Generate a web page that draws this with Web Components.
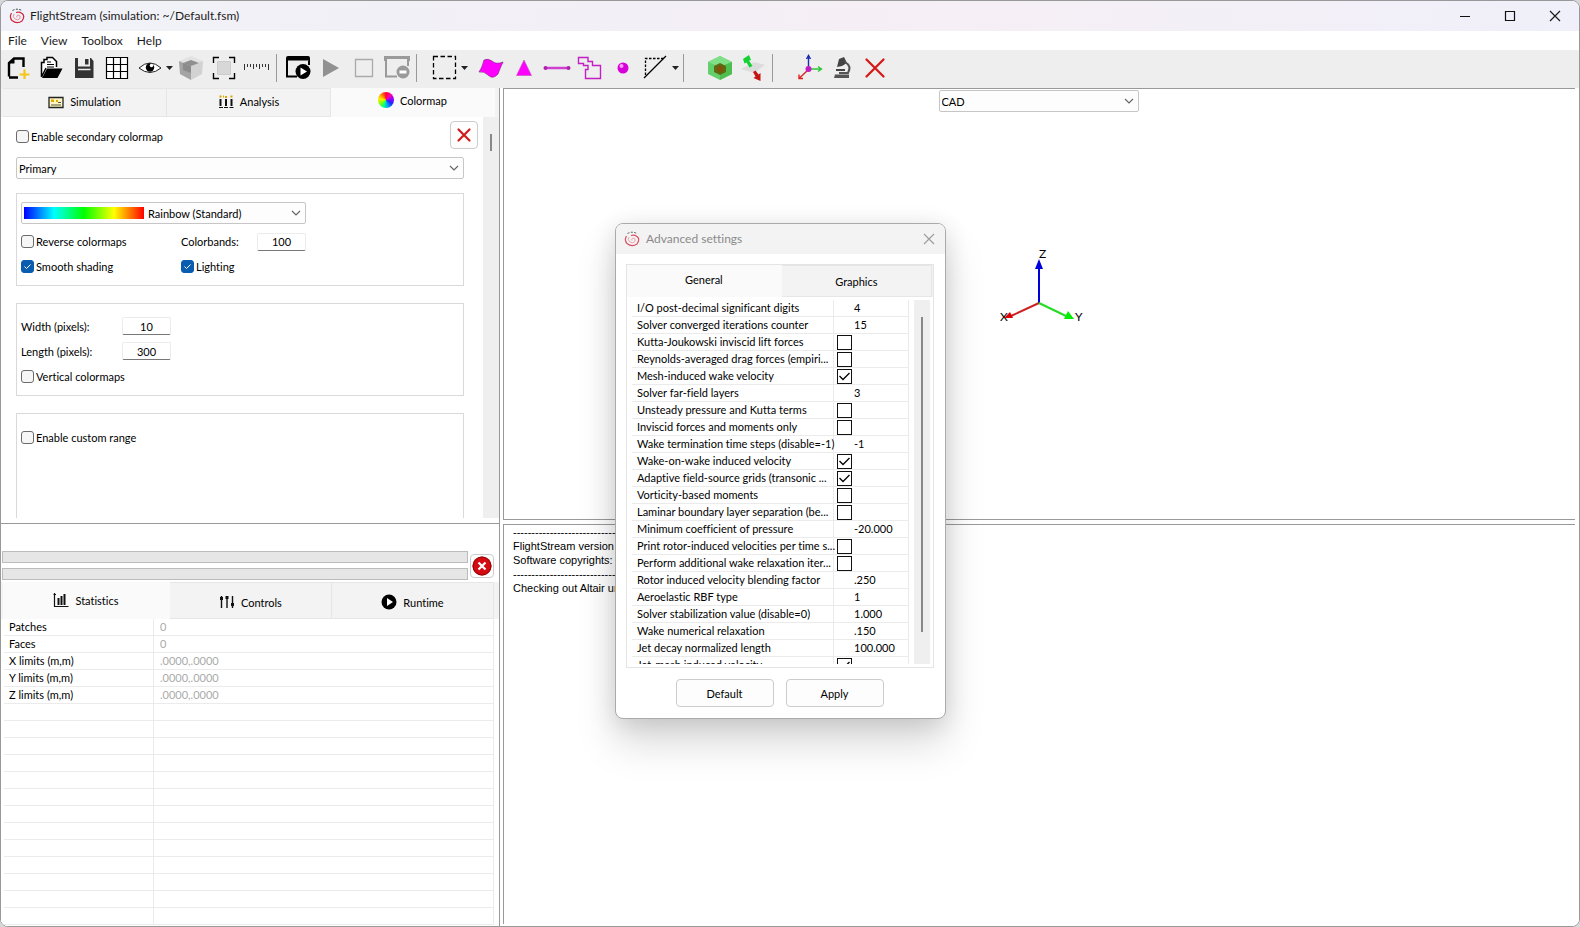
<!DOCTYPE html>
<html lang="en">
<head>
<meta charset="utf-8">
<title>FlightStream</title>
<style>
html, body { margin: 0; height: 100%; background: #d8d8dc; }
body { font: 11px/17px Lato, "Liberation Sans", sans-serif; font-variant-ligatures: none; color: #000; }
</style>
</head>
<body>
<fs-app></fs-app>
<script>
const ICONS = {
  logo: [16, 16, '<g fill="none" stroke="#d0273c"><path d="M3.5 2.500Q8 0 12.500 2.300" stroke="#333" stroke-dasharray="2 1.500"/><path d="M2.500 5Q0 9 3 12.500Q8 16.500 13 13Q16.500 8 13 5.500Q10 3.500 7 4.500" stroke-width="1.200"/><path d="M5 6Q3 9 6 11Q9 13 11 10.500Q12 7 9 7Q7 7.500 8 9.500" stroke="#e07a88" stroke-width=".8"/></g>'],
  file: [24, 24, '<path d="M3 20.500V7L8 2.500H17.500V11M17.500 14V14M3 21.500H12" fill="none" stroke="#000" stroke-width="2.400"/><path d="M3 7.500H8.500V2z"/><path d="M18.500 13.500V23M13.500 18.500H23.500" stroke="#f5c518" stroke-width="2.200"/>'],
  open: [24, 24, '<path d="M2.500 21V6.500H5V3.500H8V1.500H13.500L17.500 5.500V11M2.500 21L7 12" fill="#fff" stroke="#000" stroke-width="1.500"/><path d="M8 6H12M8 8.500H15M8 11H15" stroke="#000"/><path d="M3 22L8 12.500H23.500L18.500 22z"/>'],
  save: [24, 24, '<path d="M3 2H6V10.500H18V2H19L21.500 5V22H3z" fill="#333"/><path d="M13 3H16.500V8.500H13z" fill="#333"/><path d="M6 13.500H18.500" stroke="#eee" stroke-width="1.500"/>'],
  grid: [24, 24, '<path d="M1.500 1.500H22.500V22.500H1.500zM8.500 1.500V22.500M15.500 1.500V22.500M1.500 8.500H22.500M1.500 15.500H22.500" fill="#fff" stroke="#000" stroke-width="1.200"/>'],
  eye: [24, 24, '<path d="M1 12Q12 2 23 12Q12 21 1 12z" fill="#fff" stroke="#222" stroke-width="1"/><circle cx="12" cy="11.500" r="4.200"/><circle cx="13.500" cy="9.500" r="1.800" fill="#fff"/>'],
  caret: [8, 24, '<path d="M0 10H7L3.500 14z" fill="#222"/>'],
  cube: [28, 26, '<path d="M14 1L26 6L14 11L2 6z" fill="#e2e2e2"/><path d="M2 6L14 11V25L3 19z" fill="#a4a4a4"/><path d="M14 11L26 6L25 19L14 25z" fill="#d2d2d2"/><path d="M14 5L22 8L14 11L6 8z" fill="#8f8f8f"/><path d="M6 8L14 11V18L6 15z" fill="#8b8b8b"/>'],
  frame: [24, 24, '<path d="M5.500 5.500H18.500V18.500H5.500z" fill="#d7d7d7" stroke="#ccc"/><path d="M1.500 7V1.500H7M17 1.500H22.500V7M22.500 17V22.500H17M7 22.500H1.500V17" fill="none" stroke="#000" stroke-width="1.400"/>'],
  ruler: [28, 24, '<path d="M1.500 8V14M4.500 8V11M7.500 8V11M10.500 8V13M13.500 8V11M16.500 8V13M19.500 8V11M22.500 8V11M25.500 8V14" stroke="#333"/>'],
  run: [26, 26, '<path d="M1 3Q1 1 3 1H23Q25 1 25 3V8H23.500V5.500H1z"/><path d="M2 5V21.500H12M24 6V10" fill="none" stroke="#000" stroke-width="2"/><circle cx="18" cy="16.500" r="7.500"/><path d="M15.500 12.500L22 16.500L15.500 20.500z" fill="#fff"/>'],
  play: [24, 24, '<path d="M4 3L20 12L4 21z" fill="#919191"/>'],
  stop: [24, 24, '<path d="M3.500 3.500H20.500V20.500H3.500z" fill="none" stroke="#aaa" stroke-width="1.300"/>'],
  halt: [26, 26, '<path d="M1.500 6V2.500H24.500V6" fill="none" stroke="#9a9a9a" stroke-width="3"/><path d="M2 5V21.500H13M24 6V11" fill="none" stroke="#9a9a9a" stroke-width="2"/><circle cx="19" cy="17" r="6.500" fill="#9a9a9a"/><path d="M15.500 17H22.500" stroke="#fff" stroke-width="3"/>'],
  marquee: [26, 26, '<path d="M1.500 1.500H23.500V23.500H1.500z" fill="none" stroke="#000" stroke-width="1.300" stroke-dasharray="4.500 2.500"/>'],
  flag: [26, 24, '<path d="M6 4Q10 2 14 5Q18 9 25 6Q23 10 20 18Q15 24 10 19Q6 15 1 16Q4 12 6 4z" fill="#f0f" stroke="#7d157d" stroke-width=".6"/>'],
  tri: [24, 24, '<path d="M12 4L19.500 19.500H4.500z" fill="#f0f" stroke="#b5b" stroke-width=".6"/>'],
  line: [28, 24, '<path d="M3 12H25" stroke="#d040d0" stroke-width="2.400"/><circle cx="2.500" cy="12" r="2" fill="#a2a"/><circle cx="25.500" cy="12" r="2" fill="#a2a"/>'],
  poly: [26, 26, '<path d="M1.500 2.500H11V6.500H15.500V10.500H23.500V23.500H8.500V14.500H11V10.500H6.500V8.500H1.500z" fill="none" stroke="#c41fc4" stroke-width="1.400"/>'],
  ball: [24, 24, '<circle cx="12" cy="12" r="5.500" fill="#d800d8"/><circle cx="10.500" cy="10" r="2" fill="#ff9dff"/>'],
  cut: [26, 26, '<path d="M2.500 20V3.500H21" fill="none" stroke="#000" stroke-width="1.300" stroke-dasharray="2.500 1.500"/><path d="M1 23L23 1" stroke="#000" stroke-width="1.300"/>'],
  gcube: [28, 28, '<path d="M14 2L26 8V20L14 26L2 20V8z" fill="#62cf6a"/><path d="M14 2L26 8L14 13L2 8z" fill="#7fe087"/><path d="M14 13V26L26 20V8z" fill="#4fbe50"/><path d="M14 9L20 12V18L14 21L8 18V12z" fill="#5d6b10"/><circle cx="14" cy="15" r="3" fill="#85500c"/>'],
  flip: [26, 28, '<path d="M1 15L14 8L25 11L14 19z" fill="#dcdcdc"/><path d="M3 5L9 1L11 6L9 6.500L12.500 12L9.500 13.500L6.500 8.500L4.500 9.500z" fill="#14d234"/><path d="M13 18L15.500 16.500L18.500 20.500L20.500 19V27L13.500 24L15.500 22.500z" fill="#c41414"/>'],
  axes: [28, 28, '<path d="M13.500 14V2M11.500 5L13.500 1.500L15.500 5" fill="none" stroke="#1c2bb0" stroke-width="1.400"/><path d="M14 15H26M23 12.500L26.500 15L23 17.500" fill="none" stroke="#2bc83a" stroke-width="1.400"/><path d="M13 16L4 24.500M4 20.500V24.500H8" fill="none" stroke="#d22" stroke-width="1.400"/><circle cx="13.500" cy="15" r="3" fill="#c21cc2"/>'],
  scope: [24, 24, '<path d="M9 3L14 1L17 7L12 10L7 11z" fill="#444"/><path d="M15 6Q22 10 18 17H9" fill="none" stroke="#555" stroke-width="2"/><path d="M6 14H15" stroke="#444" stroke-width="2"/><path d="M5 18.500H19V22H4z" fill="#555"/>'],
  cross: [24, 24, '<path d="M3.500 3.500L20.500 20.500M20.500 3.500L3.500 20.500" stroke="#d41a1a" stroke-width="2.300" stroke-linecap="round"/>'],
  crossS: [16, 16, '<path d="M2.500 2.500L13.500 13.500M13.500 2.500L2.500 13.500" stroke="#cf1c1c" stroke-width="2.200" stroke-linecap="round"/>'],
  sim: [16, 16, '<path d="M1 3.500H15V13.500H1z" fill="#fdf6c0" stroke="#222" stroke-width="1.300"/><path d="M3 5.500H6V8H3zM8 6H10V8H8z" fill="#e0a800"/><path d="M3 11H13M10 8.500H13" stroke="#554"/>'],
  ana: [16, 16, '<path d="M2.500 5V12M8 5V12M13.500 5V12" stroke="#111" stroke-width="2"/><path d="M1 13.500H5M6 13.500H10M11.500 13.500H15.500" stroke="#111"/><path d="M2.500 1.500V3.500M5 2.500H6M8 2V4M13.500 1.500V3.500" stroke="#d9a400" stroke-width="2"/>'],
  stats: [16, 16, '<path d="M1.500 1V14.500H15.500M.5 2.500H3" fill="none" stroke="#111" stroke-width="1.200"/><path d="M5.500 6V13M8.500 4V13M11.500 2V13" stroke="#111" stroke-width="2"/>'],
  ctl: [16, 16, '<path d="M2.500 2V14M8 2V14M13.500 2V14" stroke="#111" stroke-width="1.400"/><path d="M1 4.500H4M6.500 3.500H9.500M12 10.500H15" stroke="#111" stroke-width="3"/>'],
  rt: [16, 16, '<circle cx="8" cy="8" r="7.500"/><path d="M6 4L12 8L6 12z" fill="#fff"/>'],
  abort: [20, 20, '<circle cx="10" cy="10" r="9.500" fill="#d40b12"/><circle cx="10" cy="10" r="9" fill="none" stroke="#8e0508"/><path d="M6.500 6.500L13.500 13.500M13.500 6.500L6.500 13.500" stroke="#fff" stroke-width="2.200"/>'],
  min: [12, 12, '<path d="M1 6.500H11" stroke="#111" stroke-width="1.200"/>'],
  max: [12, 12, '<path d="M1.500 1.500H10.500V10.500H1.500z" fill="none" stroke="#111" stroke-width="1.200"/>'],
  close: [12, 12, '<path d="M1 1L11 11M11 1L1 11" stroke="currentColor" stroke-width="1.200"/>'],
  chev: [10, 6, '<path d="M1 1L5 5L9 1" fill="none" stroke="#666" stroke-width="1.200"/>']
};
const icon = n => { const [w, h, p] = ICONS[n]; return `<svg width="${w}" height="${h}" viewBox="0 0 ${w} ${h}" aria-hidden="true">${p}</svg>`; };

const BASE = '*{box-sizing:border-box} svg{display:block;flex:none} button,input,select{font:inherit;color:inherit;margin:0} button{padding:0;border:0;background:none}';
function define(name, css, html) {
  customElements.define(name, class extends HTMLElement {
    connectedCallback() {
      if (this.shadowRoot) return;
      const t = document.createElement('template');
      t.innerHTML = `<style>${BASE}${css}</style>${typeof html === 'function' ? html(this) : html}`;
      this.attachShadow({ mode: 'open' }).append(t.content.cloneNode(true));
    }
  });
}

define('fs-titlebar', `
  :host{display:flex;align-items:center;height:30px;padding-left:8px;font-size:12px;line-height:16px;color:#1c1c1c;background:linear-gradient(90deg,#f1f2f9,#f3eff6 40%,#f6eff5 60%,#f0f0fa)}
  h1{font:inherit;margin:0 auto 0 5px}
  button{width:45px;height:30px;display:grid;place-items:center}
  .right{display:flex;margin-right:2px}`,
  `${icon('logo')}<h1>FlightStream (simulation: ~/Default.fsm)</h1>
   <div class="right"><button aria-label="Minimize">${icon('min')}</button><button aria-label="Maximize">${icon('max')}</button><button aria-label="Close">${icon('close')}</button></div>`);

define('fs-menubar', `
  :host{display:block;background:#fff;font-size:12px;line-height:19px;color:#1c1c1c}
  nav{display:flex;gap:14px;padding-left:7px}`,
  `<nav>${['File', 'View', 'Toolbox', 'Help'].map(m => `<button>${m}</button>`).join('')}</nav>`);

const TOOLS = [['file', 'New'], ['open', 'Open'], ['save', 'Save'], ['grid', 'Grid'], ['eye', 'Visibility'], ['caret', 'Visibility options'], ['cube', 'Shading'], ['frame', 'Fit view'], ['ruler', 'Measure'], 0,
  ['run', 'Run solver', 'near'], ['play', 'Play'], ['stop', 'Stop'], ['halt', 'Remove run'], 0, ['marquee', 'Select region', 'gap'], ['caret', 'Select options'], ['flag', 'Select surface', 'mid'], ['tri', 'Select face'], ['line', 'Select edge'], ['poly', 'Select loop'], ['ball', 'Select vertex'], ['cut', 'Select by plane'], ['caret', 'Plane options'], 0,
  ['gcube', 'Volume', 'wide'], ['flip', 'Flip normals'], 0, ['axes', 'Coordinate systems', 'wide'], ['scope', 'Inspect'], ['cross', 'Delete']];
define('fs-toolbar', `
  :host{display:flex;align-items:center;height:38px;box-sizing:border-box;background:#eee;padding-bottom:3px}
  button{width:33px;height:34px;display:grid;place-items:center}
  .caret{width:8px;justify-content:start}
  .sep{width:1px;height:28px;background:#999;margin:0 3px}
  .near{margin-left:1px}.gap{margin-left:8px}.mid{margin-left:5px}.wide{margin-left:16px}`,
  TOOLS.map(t => t ? `<button class="${t[0]} ${t[2] || ''}" aria-label="${t[1]}">${icon(t[0])}</button>` : '<span class="sep"></span>').join(''));

define('fs-tab', `
  :host{display:flex;flex:100;min-width:0;background:#f3f3f3;border:1px solid #e6e6e6;border-width:1px 1px 1px 0;padding:var(--tab,3px 0 0)}
  :host([selected]){flex-grow:var(--grow,103);background:#fafafa;border-color:#fafafa;padding:var(--tab-on,0 0 2px)}
  button{flex:1;display:flex;align-items:center;justify-content:center;gap:6px}
  .wheel{width:16px;height:16px;border-radius:50%;background:conic-gradient(#f03,#f0a,#90f,#22f,#09f,#0f8,#8f0,#fe0,#f80,#f03)}`,
  el => { const i = el.getAttribute('icon');
    return `<button role="tab" aria-selected="${el.hasAttribute('selected')}">${i === 'wheel' ? '<span class="wheel"></span>' : i ? icon(i) : ''}<span><slot></slot></span></button>`; });

define('fs-check', `
  :host{display:block}
  label{display:flex;align-items:center;gap:2px;height:17px}
  input{appearance:none;width:13px;height:13px;border:1px solid #6b6b6b;border-radius:3px;background:#f6f6f6}
  input:checked{border-color:#0a5cb0;background:#0a5cb0 url('data:image/svg+xml,<svg xmlns="http://www.w3.org/2000/svg" viewBox="0 0 11 11"><path d="M2.500 5.500L4.500 7.500L8.500 3.500" fill="none" stroke="white"/></svg>')}`,
  el => `<label><input type="checkbox" ${el.hasAttribute('checked') ? 'checked' : ''}><span><slot></slot></span></label>`);

define('fs-select', `
  :host{display:flex;align-items:center;height:22px;box-sizing:border-box;border:1px solid #c6c6c6;border-radius:2px;background:#fdfdfd;padding:0 4px 0 2px}
  select{appearance:none;flex:1;min-width:0;border:0;background:none;padding:0;height:20px}`,
  el => `<slot></slot><select aria-label="${el.getAttribute('label')}"><option>${el.getAttribute('value')}</option></select>${icon('chev')}`);

define('fs-field', `
  :host{display:grid;grid-template-columns:var(--label,101px) 49px;align-items:center;height:18px}
  input{width:49px;height:18px;border:1px solid #ececec;border-bottom-color:#777;border-radius:2px;background:#fff;text-align:center;padding:0}`,
  el => `<label for="f"><slot></slot></label><input id="f" type="text" value="${el.getAttribute('value')}">`);

define('fs-group', `:host{display:flex;flex-direction:column;box-sizing:border-box;border:1px solid #d9d9d9;padding:0 4px}`, '<slot></slot>');

define('fs-colormap', `
  :host{display:flex;flex-direction:column;height:436px;flex:none;box-sizing:border-box;background:#fff;border-bottom:1px solid #999}
  .tabs{display:flex;height:29px;padding:0 4px 0 2px;background:#f3f3f3;--tab:0 0 2px;--tab-on:0 0 5px;--grow:100}
  .body{flex:1;display:flex;min-height:0;overflow:hidden;margin-bottom:5px}
  .form{flex:1;padding:4px 19px 0 15px;display:flex;flex-direction:column}
  .top{display:flex;align-items:center;justify-content:space-between;margin-right:-14px}
  .top fs-check{padding-top:3px}
  .x{width:28px;height:28px;border:1px solid #ccc;border-radius:4px;background:#fdfdfd;display:grid;place-items:center}
  .top + fs-select{margin-top:8px;flex:none}
  fs-group{margin-top:17px;height:93px;flex:none}
  .top + fs-select + fs-group{margin-top:14px}
  fs-group + fs-group{margin-top:17px}
  fs-group + fs-group + fs-group{height:200px}
  .map{width:285px;margin-top:8px}
  .bar{width:120px;height:12px;margin-right:4px;background:linear-gradient(90deg,#00f,#0ff 25%,#0f0 50%,#ff0 75%,#f00)}
  .two{display:grid;grid-template-columns:160px 125px;align-items:center;height:25px}
  .two fs-field{--label:76px}
  .two:nth-of-type(1){margin-top:5px}
  .rows{display:grid;gap:7px;padding-top:13px}
  .rows fs-check{padding-top:1px}
  .only{margin-top:15px}
  .track{width:16px;background:#efefef;padding:17px 0 0 7px}
  .track i{display:block;width:2px;height:17px;background:#888}`,
  `<div class="tabs" role="tablist"><fs-tab icon="sim">Simulation</fs-tab><fs-tab icon="ana">Analysis</fs-tab><fs-tab icon="wheel" selected>Colormap</fs-tab></div>
   <div class="body"><div class="form">
     <div class="top"><fs-check>Enable secondary colormap</fs-check><button class="x" aria-label="Delete colormap">${icon('crossS')}</button></div>
     <fs-select label="Colormap slot" value="Primary"></fs-select>
     <fs-group><fs-select class="map" label="Palette" value="Rainbow (Standard)"><span class="bar"></span></fs-select>
       <div class="two"><fs-check>Reverse colormaps</fs-check><fs-field value="100">Colorbands:</fs-field></div>
       <div class="two"><fs-check checked>Smooth shading</fs-check><fs-check checked>Lighting</fs-check></div></fs-group>
     <fs-group><div class="rows"><fs-field value="10">Width (pixels):</fs-field><fs-field value="300">Length (pixels):</fs-field><fs-check>Vertical colormaps</fs-check></div></fs-group>
     <fs-group><fs-check class="only">Enable custom range</fs-check></fs-group>
   </div><div class="track"><i></i></div></div>`);

const STATS = [['Patches', '0'], ['Faces', '0'], ['X limits (m,m)', '.0000,.0000'], ['Y limits (m,m)', '.0000,.0000'], ['Z limits (m,m)', '.0000,.0000']];
while (STATS.length < 18) STATS.push(['', '']);
define('fs-statistics', `
  :host{display:flex;flex-direction:column;flex:1;background:#fff;padding-top:27px}
  .progress{display:flex;gap:2px;align-items:center;padding:0 5px 0 1px}
  .bars{flex:1;display:grid;gap:5px}
  .bars div{height:12px;background:#e6e6e6;border:1px solid #bcbcbc}
  .abort{width:24px;height:24px;border:1px solid #ccc;border-radius:4px;background:#fff;display:grid;place-items:center}
  .tabs{display:flex;height:37px;margin-top:2px;padding:0 5px 0 2px;background:#f3f3f3;--tab:3px 0 0;--tab-on:0 0 1px}
  table{border-collapse:separate;border-spacing:0;table-layout:fixed;width:490px;margin-left:3px}
  td,th{height:17px;padding:0 0 0 5px;border-bottom:1px solid #ebebeb;border-right:1px solid #ebebeb;text-align:left;font-weight:400;line-height:16px}
  th{width:150px}td{color:#aaa;padding-left:6px}`,
  `<div class="progress"><div class="bars"><div></div><div></div></div><button class="abort" aria-label="Abort">${icon('abort')}</button></div>
   <div class="tabs" role="tablist"><fs-tab icon="stats" selected>Statistics</fs-tab><fs-tab icon="ctl">Controls</fs-tab><fs-tab icon="rt">Runtime</fs-tab></div>
   <table>${STATS.map(r => `<tr><th scope="row">${r[0]}</th><td>${r[1]}</td></tr>`).join('')}</table>`);

define('fs-viewport', `
  :host{display:flex;flex-direction:column;align-items:center;height:432px;box-sizing:border-box;flex:none;border:1px solid #999;border-right:0;background:#fff;padding:1px 2px 0 0}
  fs-select{width:200px}
  svg{margin-top:131px}
  text{font:12px Lato,sans-serif}`,
  `<fs-select label="View" value="CAD"></fs-select>
   <svg width="100" height="84" viewBox="0 -4 100 84"><text x="50" y="11">Z</text><text x="11" y="74">X</text><text x="86" y="74">Y</text>
   <path d="M50 56V20" stroke="#0000d8" stroke-width="2"/><path d="M50 12L54 22H46z" fill="#00d"/>
   <path d="M50 56L22 69" stroke="#c22" stroke-width="2"/><path d="M15 71L21 65L24 71z" fill="#d00"/>
   <path d="M50 56L77 69" stroke="#2d2" stroke-width="2"/><path d="M85 72L79 64L75 72z" fill="#0e0"/></svg>`);

define('fs-console', `
  :host{display:block;flex:1;border:1px solid #999;border-width:1px 0 0 1px;background:#fff;padding:0 9px;font:11px/14px "Liberation Sans",sans-serif;overflow:hidden}
  pre{margin:0;font:inherit}`,
  `<pre>----------------------------
FlightStream version 2
Software copyrights:
----------------------------
Checking out Altair un</pre>`);

const SETTINGS = [['I/O post-decimal significant digits', '4'], ['Solver converged iterations counter', '15'], ['Kutta-Joukowski inviscid lift forces', false], ['Reynolds-averaged drag forces (empiri...', false], ['Mesh-induced wake velocity', true], ['Solver far-field layers', '3'], ['Unsteady pressure and Kutta terms', false], ['Inviscid forces and moments only', false], ['Wake termination time steps (disable=-1)', '-1'], ['Wake-on-wake induced velocity', true], ['Adaptive field-source grids (transonic ...', true], ['Vorticity-based moments', false], ['Laminar boundary layer separation (be...', false], ['Minimum coefficient of pressure', '-20.000'], ['Print rotor-induced velocities per time s...', false], ['Perform additional wake relaxation iter...', false], ['Rotor induced velocity blending factor', '.250'], ['Aeroelastic RBF type', '1'], ['Solver stabilization value (disable=0)', '1.000'], ['Wake numerical relaxation', '.150'], ['Jet decay normalized length', '100.000'], ['Jet-mesh induced velocity', true]];
define('fs-settings-dialog', `
  :host{display:block;width:331px;box-sizing:border-box;border:1px solid #aaa;border-radius:8px;background:#fff;overflow:hidden;box-shadow:0 24px 40px rgba(0,0,0,.15),0 4px 24px rgba(0,0,0,.12)}
  header{display:flex;align-items:center;height:30px;padding:0 8px;background:#f3f3f3;font-size:12px;line-height:16px;color:#8a8a8a}
  h2{font:inherit;margin:0 auto 0 6px}
  header button{width:14px;height:30px}
  header svg:first-child{opacity:.8}
  .frame{margin:10px 11px 0 10px;border:1px solid #e4e4e4;height:404px;display:flex;flex-direction:column;overflow:hidden}
  .tabs{display:flex;height:32px;flex:none;background:#f3f3f3;padding-right:1px;--tab:1px 0 0;--tab-on:0 0 3px}
  .list{display:flex;justify-content:space-between;margin:3px 3px 3px 5px;height:364px;overflow:hidden}
  table{border-collapse:separate;border-spacing:0;table-layout:fixed;width:277px;height:374px}
  td,th{height:17px;padding:0 0 0 5px;border-bottom:1px solid #ebebeb;border-right:1px solid #ebebeb;text-align:left;font-weight:400;line-height:16px;white-space:nowrap}
  th{width:202px}td{padding-left:20px}.c{padding-left:3px}
  td input{display:block;appearance:none;width:15px;height:15px;border:1px solid #111;background:#fff}
  td input:checked{background:url('data:image/svg+xml,<svg xmlns="http://www.w3.org/2000/svg" viewBox="0 0 13 13"><path d="M1.500 6L5 9.500L11.500 3" fill="none" stroke="black" stroke-width="1.300"/></svg>')}
  .track{width:16px;background:#efefef;padding:17px 0 0 7px}
  .track i{display:block;width:2px;height:315px;background:#888}
  footer{display:flex;justify-content:center;gap:12px;padding:11px 2px 11px 0}
  footer button{width:98px;height:28px;border:1px solid #ccc;border-radius:4px;background:#fdfdfd}`,
  `<header>${icon('logo')}<h2>Advanced settings</h2><button aria-label="Close">${icon('close')}</button></header>
   <div class="frame"><div class="tabs" role="tablist"><fs-tab selected>General</fs-tab><fs-tab>Graphics</fs-tab></div>
   <div class="list"><table>${SETTINGS.map(([n, v], i) => typeof v === 'boolean'
      ? `<tr><th scope="row"><label for="s${i}">${n}</label></th><td class="c"><input id="s${i}" type="checkbox" ${v ? 'checked' : ''}></td></tr>`
      : `<tr><th scope="row">${n}</th><td>${v}</td></tr>`).join('')}</table><div class="track"><i></i></div></div></div>
   <footer><button>Default</button><button>Apply</button></footer>`);

define('fs-app', `
  :host{display:flex;flex-direction:column;min-height:100vh;position:relative;border:1px solid #999;border-radius:8px;background:#fff;overflow:hidden;box-sizing:border-box}
  main{flex:1;display:flex;background:#fff}
  .side{width:499px;flex:none;display:flex;flex-direction:column;border-right:1px solid #999}
  .work{flex:1;min-width:0;display:flex;flex-direction:column;gap:4px;padding:0 4px 2px 3px}
  fs-settings-dialog{position:absolute;left:614px;top:222px}`,
  `<fs-titlebar></fs-titlebar><fs-menubar></fs-menubar><fs-toolbar></fs-toolbar>
   <main><div class="side"><fs-colormap></fs-colormap><fs-statistics></fs-statistics></div>
   <div class="work"><fs-viewport></fs-viewport><fs-console></fs-console></div></main>
   <fs-settings-dialog role="dialog" aria-label="Advanced settings"></fs-settings-dialog>`);
</script>
</body>
</html>
